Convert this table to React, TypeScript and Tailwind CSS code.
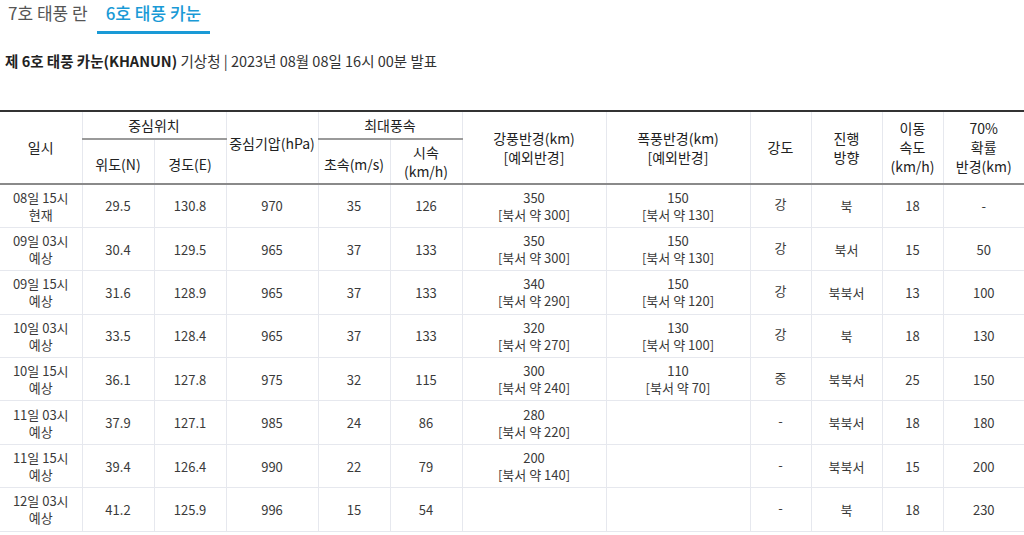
import React from 'react'

type Row = {
  time: string
  kind: string
  lat: string
  lon: string
  pressure: string
  ms: string
  kmh: string
  strong?: [string, string]
  storm?: [string, string]
  grade: string
  dir: string
  speed: string
  radius: string
}

const rows: Row[] = [
  { time: '08일 15시', kind: '현재', lat: '29.5', lon: '130.8', pressure: '970', ms: '35', kmh: '126', strong: ['350', '[북서 약 300]'], storm: ['150', '[북서 약 130]'], grade: '강', dir: '북', speed: '18', radius: '-' },
  { time: '09일 03시', kind: '예상', lat: '30.4', lon: '129.5', pressure: '965', ms: '37', kmh: '133', strong: ['350', '[북서 약 300]'], storm: ['150', '[북서 약 130]'], grade: '강', dir: '북서', speed: '15', radius: '50' },
  { time: '09일 15시', kind: '예상', lat: '31.6', lon: '128.9', pressure: '965', ms: '37', kmh: '133', strong: ['340', '[북서 약 290]'], storm: ['150', '[북서 약 120]'], grade: '강', dir: '북북서', speed: '13', radius: '100' },
  { time: '10일 03시', kind: '예상', lat: '33.5', lon: '128.4', pressure: '965', ms: '37', kmh: '133', strong: ['320', '[북서 약 270]'], storm: ['130', '[북서 약 100]'], grade: '강', dir: '북', speed: '18', radius: '130' },
  { time: '10일 15시', kind: '예상', lat: '36.1', lon: '127.8', pressure: '975', ms: '32', kmh: '115', strong: ['300', '[북서 약 240]'], storm: ['110', '[북서 약 70]'], grade: '중', dir: '북북서', speed: '25', radius: '150' },
  { time: '11일 03시', kind: '예상', lat: '37.9', lon: '127.1', pressure: '985', ms: '24', kmh: '86', strong: ['280', '[북서 약 220]'], grade: '-', dir: '북북서', speed: '18', radius: '180' },
  { time: '11일 15시', kind: '예상', lat: '39.4', lon: '126.4', pressure: '990', ms: '22', kmh: '79', strong: ['200', '[북서 약 140]'], grade: '-', dir: '북북서', speed: '15', radius: '200' },
  { time: '12일 03시', kind: '예상', lat: '41.2', lon: '125.9', pressure: '996', ms: '15', kmh: '54', grade: '-', dir: '북', speed: '18', radius: '230' },
]

const th = 'border-x border-[#e6e8ee] font-normal text-center align-middle text-[14px] leading-[19px] text-[#222]'
const td = 'border border-[#e6e8ee] text-center align-middle text-[13px] leading-[17px] text-[#3a3a3a]'

function TwoLine({ pair }: { pair?: [string, string] }) {
  if (!pair) return null
  return (
    <>
      <div>{pair[0]}</div>
      <div>{pair[1]}</div>
    </>
  )
}

export default function App() {
  return (
    <div className="h-[535px] w-[1024px] overflow-hidden bg-white font-['Noto_Sans_CJK_KR','Noto_Sans',sans-serif]">
      <div className="flex h-[34px] items-stretch">
        <div className="pl-2 pr-[9px] pt-[1px] text-[17px] leading-[24px] text-[#555]">7호 태풍 란</div>
        <div className="border-b-[3px] border-[#1a9ad6] px-[9px] pt-[1px] text-[17px] font-medium leading-[24px] text-[#1a9ad6]">
          6호 태풍 카눈
        </div>
      </div>

      <div className="mt-[17px] pl-[5px] text-[14.5px] leading-[20px] text-[#222]">
        <span className="font-semibold">제 6호 태풍 카눈(KHANUN)</span>
        <span className="text-[#333]"> 기상청 | 2023년 08월 08일 16시 00분 발표</span>
      </div>

      <table className="mt-[39px] w-[1024px] table-fixed border-collapse border-t-2 border-[#333]">
        <colgroup>
          <col className="w-[82px]" />
          <col className="w-[72px]" />
          <col className="w-[72px]" />
          <col className="w-[92px]" />
          <col className="w-[72px]" />
          <col className="w-[72px]" />
          <col className="w-[144px]" />
          <col className="w-[144px]" />
          <col className="w-[61px]" />
          <col className="w-[71px]" />
          <col className="w-[61px]" />
          <col className="w-[81px]" />
        </colgroup>
        <thead>
          <tr className="h-[28px]">
            <th rowSpan={2} className={`${th} border-l-0`}>일시</th>
            <th colSpan={2} className={`${th} border-b-2 border-b-[#9a9a9a]`}>중심위치</th>
            <th rowSpan={2} className={`${th} pb-[8px]`}>중심기압(hPa)</th>
            <th colSpan={2} className={`${th} border-b-2 border-b-[#9a9a9a]`}>최대풍속</th>
            <th rowSpan={2} className={th}>
              강풍반경(km)
              <br />
              [예외반경]
            </th>
            <th rowSpan={2} className={th}>
              폭풍반경(km)
              <br />
              [예외반경]
            </th>
            <th rowSpan={2} className={th}>강도</th>
            <th rowSpan={2} className={th}>
              진행
              <br />
              방향
            </th>
            <th rowSpan={2} className={th}>
              이동
              <br />
              속도
              <br />
              (km/h)
            </th>
            <th rowSpan={2} className={`${th} border-r-0`}>
              70%
              <br />
              확률
              <br />
              반경(km)
            </th>
          </tr>
          <tr className="h-[45px] border-b-2 border-[#8a8a8a]">
            <th className={`${th} pt-[6px]`}>위도(N)</th>
            <th className={`${th} pt-[6px]`}>경도(E)</th>
            <th className={`${th} pt-[6px]`}>초속(m/s)</th>
            <th className={th}>
              시속
              <br />
              (km/h)
            </th>
          </tr>
        </thead>
        <tbody>
          {rows.map((r) => (
            <tr key={r.time} className="h-[43.4px]">
              <td className={`${td} border-l-0`}>
                <div>{r.time}</div>
                <div>{r.kind}</div>
              </td>
              <td className={td}>{r.lat}</td>
              <td className={td}>{r.lon}</td>
              <td className={td}>{r.pressure}</td>
              <td className={td}>{r.ms}</td>
              <td className={td}>{r.kmh}</td>
              <td className={td}>
                <TwoLine pair={r.strong} />
              </td>
              <td className={td}>
                <TwoLine pair={r.storm} />
              </td>
              <td className={`${td} pb-[4px]`}>{r.grade}</td>
              <td className={td}>{r.dir}</td>
              <td className={td}>{r.speed}</td>
              <td className={`${td} border-r-0`}>{r.radius}</td>
            </tr>
          ))}
        </tbody>
      </table>
    </div>
  )
}
